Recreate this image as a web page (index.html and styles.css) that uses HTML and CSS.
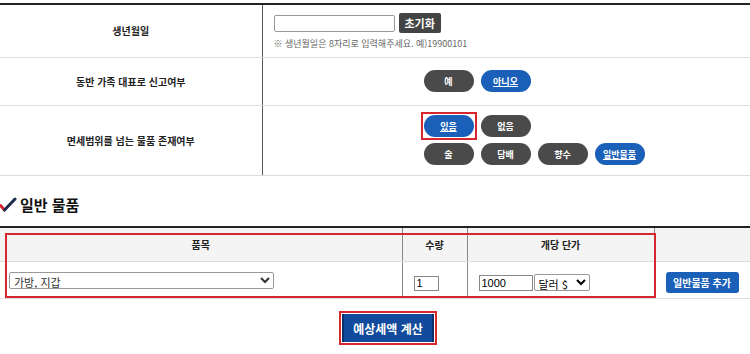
FILE: index.html
```html
<!DOCTYPE html>
<html lang="ko">
<head>
  <meta charset="UTF-8">
  <title>휴대품 예상세액 조회</title>
  <link rel="stylesheet" href="styles.css">
</head>
<body>
<div class="wrap">
  <table class="info">
    <tr class="row-birth">
      <th>생년월일</th>
      <td>
        <div class="birth">
          <input type="text" class="birth-input">
          <button class="btn-reset">초기화</button>
        </div>
        <p class="note">※ 생년월일은 8자리로 입력해주세요. 예)19900101</p>
      </td>
    </tr>
    <tr class="row-family">
      <th>동반 가족 대표로 신고여부</th>
      <td>
        <div class="choices">
          <a class="pill">예</a><a class="pill on">아니오</a>
        </div>
      </td>
    </tr>
    <tr class="row-over">
      <th>면세범위를 넘는 물품 존재여부</th>
      <td>
        <div class="choices">
          <span class="marked"><a class="pill on">있음</a></span><a class="pill">없음</a>
        </div>
        <div class="choices">
          <a class="pill">술</a><a class="pill">담배</a><a class="pill">향수</a><a class="pill on">일반물품</a>
        </div>
      </td>
    </tr>
  </table>

  <h3 class="title">
    <svg class="check" width="18" height="16" viewBox="0 0 18 16">
      <path d="M1.5 8.5 L5.5 13" stroke="#d7232e" stroke-width="3" fill="none" stroke-linecap="round"/>
      <path d="M5.5 13 L16 2" stroke="#1d2a4a" stroke-width="3" fill="none" stroke-linecap="round"/>
    </svg>
    일반 물품
  </h3>

  <div class="goods-box">
    <table class="goods">
      <tr>
        <th class="c-name">품목</th>
        <th class="c-qty">수량</th>
        <th class="c-price">개당 단가</th>
        <th class="c-add"></th>
      </tr>
      <tr>
        <td class="c-name">
          <select class="sel-item">
            <option>가방, 지갑</option>
          </select>
        </td>
        <td class="c-qty"><input type="text" class="qty" value="1"></td>
        <td class="c-price">
          <input type="text" class="price" value="1000"><select class="sel-cur">
            <option>달러 $</option>
          </select>
        </td>
        <td class="c-add"><button class="btn-add">일반물품 추가</button></td>
      </tr>
    </table>
    <div class="mark-box"></div>
  </div>

  <div class="calc">
    <span class="calc-mark"><button class="btn-calc">예상세액 계산</button></span>
  </div>
</div>
</body>
</html>
```

FILE: styles.css
```css
*{
  margin: 0;
  padding: 0;
  box-sizing: border-box;
}
body{
  font-family: "Noto Sans CJK KR", "Noto Sans", sans-serif;
  color: #222;
  background: #fff;
}
.wrap{
  width: 750px;
  padding-top: 3px;
}
table{
  width: 100%;
  border-collapse: collapse;
}
.info{
  border-top: 2px solid #222;
}
.info th{
  width: 262px;
  font-size: 10px;
  font-weight: bold;
  text-align: center;
  border-right: 1px solid #555;
  border-bottom: 1px solid #ddd;
}
.info td{
  padding-left: 11px;
  border-bottom: 1px solid #ddd;
  vertical-align: middle;
}
.row-birth th, .row-birth td{
  height: 53px;
}
.row-family th, .row-family td{
  height: 48px;
}
.row-over th, .row-over td{
  height: 70px;
}
.birth{
  display: flex;
  align-items: center;
  gap: 4px;
  margin-top: 2px;
}
.birth-input{
  width: 121px;
  height: 17px;
  border: 1px solid #999;
  border-radius: 2px;
}
.btn-reset{
  height: 20px;
  padding: 0 6px;
  border: none;
  border-radius: 2px;
  background: #444;
  color: #fff;
  font-family: inherit;
  font-size: 11px;
  font-weight: bold;
}
.note{
  margin-top: 4px;
  font-size: 9px;
  color: #666;
}
.choices{
  display: flex;
  gap: 7px;
  margin-left: 150px;
}
.choices + .choices{
  margin-top: 6px;
}
.pill{
  display: flex;
  align-items: center;
  justify-content: center;
  width: 50px;
  height: 22px;
  border-radius: 11px;
  background: #4a4a4a;
  color: #fff;
  font-size: 9px;
  font-weight: bold;
}
.pill.on{
  background: #1a5fb8;
  text-decoration: underline;
}
.marked{
  display: block;
  margin: -3px;
  padding: 1px;
  border: 2px solid #d6262e;
}
.title{
  display: flex;
  align-items: center;
  gap: 3px;
  height: 50px;
  padding-top: 8px;
  font-size: 15px;
  font-weight: bold;
  color: #111;
}
.check{
  margin-left: -1px;
}
.goods-box{
  position: relative;
}
.goods{
  border-top: 2px solid #222;
}
.goods th{
  height: 35px;
  background: #f4f4f4;
  font-size: 10px;
  font-weight: bold;
  text-align: center;
  border-bottom: 1px solid #ddd;
}
.goods td{
  height: 37px;
  padding-left: 9px;
  border-bottom: 1px solid #ddd;
  vertical-align: middle;
}
.goods .c-name{
  width: 402px;
  border-right: 1px solid #888;
}
.goods .c-qty{
  width: 65px;
  border-right: 1px solid #888;
}
.goods .c-price{
  width: 187px;
  border-right: 1px solid #888;
}
.goods td.c-qty, .goods td.c-price, .goods td.c-add{
  padding-left: 11px;
}
.sel-item{
  width: 265px;
  height: 17px;
  font-family: inherit;
  font-size: 11px;
  color: #333;
  border: 1px solid #999;
  border-radius: 2px;
  background: #fff;
}
.qty{
  width: 25px;
  height: 15px;
  font-size: 11px;
  border: 1px solid #888;
  padding-left: 2px;
}
.price{
  width: 54px;
  height: 16px;
  font-size: 11px;
  border: 1px solid #888;
  padding-left: 2px;
  vertical-align: middle;
}
.sel-cur{
  width: 56px;
  height: 17px;
  margin-left: 1px;
  font-family: inherit;
  font-size: 11px;
  border: 1px solid #999;
  border-radius: 2px;
  background: #fff;
  vertical-align: middle;
}
.btn-add{
  width: 73px;
  height: 21px;
  border: none;
  border-radius: 3px;
  background: #1a5fb8;
  color: #fff;
  font-family: inherit;
  font-size: 10px;
  font-weight: bold;
}
.mark-box{
  position: absolute;
  left: 5px;
  top: 7px;
  width: 651px;
  height: 65px;
  border: 2px solid #d6262e;
  pointer-events: none;
}
.calc{
  display: flex;
  justify-content: center;
  padding-top: 12px;
  padding-left: 26px;
}
.calc-mark{
  display: block;
  padding: 1px;
  border: 2px solid #d6262e;
}
.btn-calc{
  display: block;
  width: 92px;
  height: 28px;
  border: none;
  border-left: 2px solid #0b2f66;
  border-right: 2px solid #0b2f66;
  background: #124b9b;
  color: #fff;
  font-family: inherit;
  font-size: 12px;
  font-weight: bold;
}
```
